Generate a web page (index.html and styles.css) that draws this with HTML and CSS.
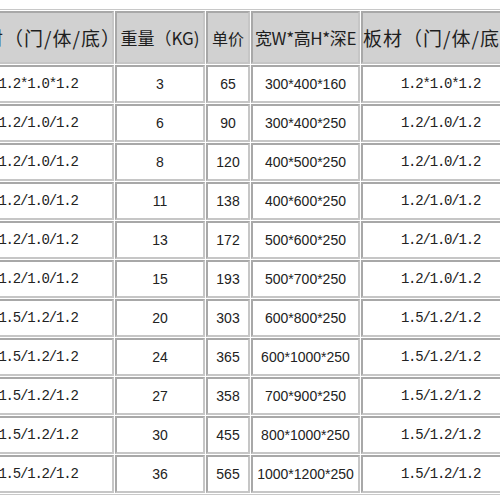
FILE: index.html
```html
<!DOCTYPE html>
<html lang="zh-CN">
<head>
<meta charset="utf-8">
<title>规格表</title>
<link rel="stylesheet" href="styles.css">
</head>
<body>
<div class="wrap">
<table class="spec">
<thead>
<tr class="head">
<th class="c1 h-wide">板材（门/体/底）</th>
<th class="c2 h-mid">重量（KG)</th>
<th class="c3 h-price">单价</th>
<th class="c4 h-dim">宽W*高H*深E</th>
<th class="c5 h-wide">板材（门/体/底）</th>
</tr>
</thead>
<tbody>
<tr><td class="mono">1.2*1.0*1.2</td><td>3</td><td>65</td><td>300*400*160</td><td class="mono">1.2*1.0*1.2</td></tr>
<tr><td class="mono">1.2/1.0/1.2</td><td>6</td><td>90</td><td>300*400*250</td><td class="mono">1.2/1.0/1.2</td></tr>
<tr><td class="mono">1.2/1.0/1.2</td><td>8</td><td>120</td><td>400*500*250</td><td class="mono">1.2/1.0/1.2</td></tr>
<tr><td class="mono">1.2/1.0/1.2</td><td>11</td><td>138</td><td>400*600*250</td><td class="mono">1.2/1.0/1.2</td></tr>
<tr><td class="mono">1.2/1.0/1.2</td><td>13</td><td>172</td><td>500*600*250</td><td class="mono">1.2/1.0/1.2</td></tr>
<tr><td class="mono">1.2/1.0/1.2</td><td>15</td><td>193</td><td>500*700*250</td><td class="mono">1.2/1.0/1.2</td></tr>
<tr><td class="mono">1.5/1.2/1.2</td><td>20</td><td>303</td><td>600*800*250</td><td class="mono">1.5/1.2/1.2</td></tr>
<tr><td class="mono">1.5/1.2/1.2</td><td>24</td><td>365</td><td>600*1000*250</td><td class="mono">1.5/1.2/1.2</td></tr>
<tr><td class="mono">1.5/1.2/1.2</td><td>27</td><td>358</td><td>700*900*250</td><td class="mono">1.5/1.2/1.2</td></tr>
<tr><td class="mono">1.5/1.2/1.2</td><td>30</td><td>455</td><td>800*1000*250</td><td class="mono">1.5/1.2/1.2</td></tr>
<tr><td class="mono">1.5/1.2/1.2</td><td>36</td><td>565</td><td>1000*1200*250</td><td class="mono">1.5/1.2/1.2</td></tr>
</tbody>
</table>
</div>
</body>
</html>
```

FILE: styles.css
```css
html, body {
  margin: 0;
  padding: 0;
  background: #ffffff;
}

.wrap {
  width: 500px;
  height: 500px;
  overflow: hidden;
  padding-top: 9px;
  box-sizing: border-box;
}

.spec {
  margin-left: -40px;
  table-layout: fixed;
  width: 562px;
  border: 1px solid #c8c8c8;
  border-spacing: 1px;
  border-collapse: separate;
  color: #222222;
}

.spec th,
.spec td {
  box-sizing: border-box;
  padding: 0;
  border: 2px solid;
  border-color: #a8a8a8 #c6c6c6 #c6c6c6 #a8a8a8;
  text-align: center;
  vertical-align: middle;
  white-space: nowrap;
  overflow: hidden;
}

.spec th {
  background: #d1d1d1;
  font-family: "Noto Sans CJK SC", "Noto Sans", sans-serif;
  font-weight: normal;
  font-size: 15px;
  color: #1e1e1e;
}

.spec th.h-wide {
  font-size: 19px;
  letter-spacing: 1px;
}

.spec th.h-mid {
  font-size: 17px;
}

.spec th.h-price {
  font-size: 16px;
}

.spec th.h-dim {
  font-size: 17px;
  letter-spacing: -0.4px;
}

.spec .c1 { width: 152px; }
.spec .c2 { width: 90px; }
.spec .c3 { width: 44px; }
.spec .c4 { width: 109px; }
.spec .c5 { width: 159px; }

.head {
  height: 53px;
}

.spec tbody tr {
  height: 38px;
}

.spec td {
  background: #ffffff;
  font-family: "Liberation Sans", Arial, sans-serif;
  font-size: 14px;
  color: #222222;
}

.spec td.mono {
  font-family: "Liberation Mono", "DejaVu Sans Mono", monospace;
  font-size: 14px;
  letter-spacing: -1.2px;
}
```
